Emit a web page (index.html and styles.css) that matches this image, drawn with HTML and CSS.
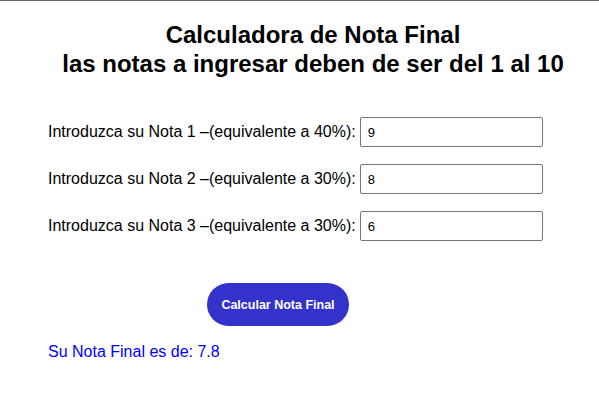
FILE: index.html
```html
<!DOCTYPE html>
<html lang="es">
<head>
<meta charset="utf-8">
<title>Calculadora de Nota Final</title>
<link rel="stylesheet" href="styles.css">
</head>
<body>
<div class="topline"></div>
<main class="calc">
  <h1 class="title">Calculadora de Nota Final<br>las notas a ingresar deben de ser del 1 al 10</h1>
  <form class="form">
    <div class="row">
      <label class="label" for="n1">Introduzca su Nota 1 –(equivalente a 40%):</label>
      <input class="field" id="n1" type="text" value="9">
    </div>
    <div class="row">
      <label class="label" for="n2">Introduzca su Nota 2 –(equivalente a 30%):</label>
      <input class="field" id="n2" type="text" value="8">
    </div>
    <div class="row">
      <label class="label" for="n3">Introduzca su Nota 3 –(equivalente a 30%):</label>
      <input class="field" id="n3" type="text" value="6">
    </div>
    <div class="actions">
      <button class="btn" type="button">Calcular Nota Final</button>
    </div>
  </form>
  <p class="result">Su Nota Final es de: 7.8</p>
</main>
</body>
</html>
```
FILE: styles.css
```css
html, body {
  margin: 0;
  padding: 0;
  background: #fff;
}
body {
  font-family: "Liberation Sans", Arial, sans-serif;
  color: #000;
}
.topline {
  height: 1px;
  background: #666;
}
.calc {
  padding: 0 8px 0 48px;
}
.title {
  margin: 19px 0 0 -13px;
  text-align: center;
  font-size: 24px;
  line-height: 29px;
  font-weight: bold;
}
.form {
  margin-top: 39px;
  display: flex;
  flex-direction: column;
  gap: 17px;
}
.row {
  display: flex;
  align-items: center;
  gap: 4px;
  height: 30px;
}
.label {
  font-size: 16px;
}
.field {
  width: 183px;
  height: 30px;
  box-sizing: border-box;
  border: 1px solid #767676;
  border-radius: 2px;
  padding: 0 7px;
  font-family: "Liberation Sans", Arial, sans-serif;
  font-size: 13px;
  color: #000;
}
.actions {
  padding-left: 159px;
  margin-top: 25px;
}
.btn {
  width: 142px;
  height: 43px;
  border: none;
  border-radius: 22px;
  background: #3333cc;
  color: #fff;
  font-family: "Liberation Sans", Arial, sans-serif;
  font-size: 12.5px;
  font-weight: bold;
}
.result {
  margin: 17px 0 0;
  color: #0000ff;
  font-size: 16px;
}
```
